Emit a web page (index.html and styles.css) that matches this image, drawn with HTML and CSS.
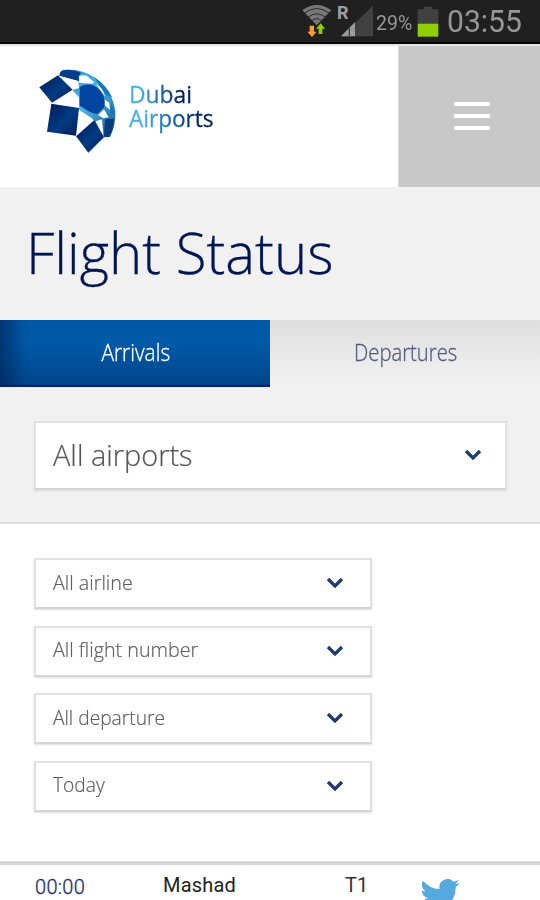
FILE: index.html
```html
<!DOCTYPE html>
<html lang="en">
<head>
<meta charset="utf-8">
<title>Flight Status</title>
<link rel="stylesheet" href="styles.css">
</head>
<body>
<div class="statusbar">
  <svg class="signals" width="75" height="42" viewBox="0 0 225 126">
    <path d="M7 31Q50 -1 94 31L50 76Z" fill="#777"/>
    <g fill="none" stroke="#2a2a2a" stroke-width="3">
      <path d="M14 39Q50 12 87 39"/><path d="M25 51Q50 32 76 51"/><path d="M35 62Q50 50 66 62"/>
    </g>
    <path d="M29 77h13v18h8L36 111 22 95h7Z" fill="#ff9c38"/>
    <path d="M56 102V86h-8l14-16 13 16h-8v16Z" fill="#8fd000"/>
    <path d="M123 109L219 17v92Z" fill="#414141"/>
    <path d="M123 109L165 66v43Z" fill="#9b9b9b"/>
    <path d="M148 84v25" stroke="#444" stroke-width="4"/>
    <text x="111" y="58" class="roam">R</text>
  </svg>
  <span class="percent"><span>29%</span></span>
  <svg class="battery" width="22" height="42" viewBox="0 0 66 126">
    <path d="M2 28h18v-8h25v8h19v43H2Z" fill="#414141"/><path d="M2 71h62v39H2Z" fill="#8fd000"/>
  </svg>
  <span class="clock"><span>03:55</span></span>
</div>
<header class="header">
  <div class="brand">
    <svg class="mark" width="90" height="100" viewBox="0 0 270 300">
      <defs>
        <linearGradient id="navy" x1="0" y1="0" x2="1" y2="1"><stop offset="0" stop-color="#001c55"/><stop offset=".55" stop-color="#003b83"/><stop offset="1" stop-color="#001c55"/></linearGradient>
        <linearGradient id="sky" x1="0" y1="0" x2="1" y2="1"><stop offset="0" stop-color="#2b8fca"/><stop offset=".5" stop-color="#4bb5e4"/><stop offset="1" stop-color="#16528f"/></linearGradient>
      </defs>
      <path d="M89 46Q90 32 103 30Q153 24 193 52Q246 88 256 153Q258 199 239 231L222 232 193 182 147 150 127 89 147 64Z" fill="url(#sky)"/>
      <path d="M88 47Q90 31 103 30Q130 27 153 38L146 50 147 64Z" fill="#003f88"/>
      <path d="M88 48L145 63 147 84 127 90ZM127 90L147 112 147 146 66 129ZM148 47L168 46 193 67 187 71 147 68ZM198 72L215 85 226 110 212 92ZM221 117L238 128 240 150 224 136ZM222 148L236 172 220 175 204 165ZM196 184L216 178 221 231ZM147 149L190 178 139 228Z" fill="#fff"/>
      <path d="M193 52Q230 77 246 112L228 104 212 82ZM243 130Q252 148 252 170L240 158Z" fill="#1876b8"/>
      <path d="M149 81Q163 72 184 74Q208 81 219 104Q228 125 222 142L203 162Q191 162 176 154L149 137Z" fill="#0046a0"/>
      <path d="M226 176L252 176Q250 207 239 231L221 230Z" fill="#073c7c"/>
      <path d="M84 46L128 89 66 128 28 82Z" fill="url(#navy)"/>
      <path d="M64 131L147 144 138 227 51 215Z" fill="url(#navy)"/>
      <path d="M193 180L222 232 175 278 138 229Z" fill="url(#navy)"/>
    </svg>
    <div class="wordmark"><span class="wm1">Dubai</span><span class="wm2">Airports</span></div>
  </div>
  <div class="menu"><i></i><i></i><i></i></div>
</header>
<section class="top">
  <h1><span>Flight Status</span></h1>
  <nav class="tabs">
    <div class="tab active"><span>Arrivals</span></div>
    <div class="tab"><span>Departures</span></div>
  </nav>
  <div class="select large"><span>All airports</span><svg width="18" height="12" viewBox="0 0 18 12"><path d="M2 2l7 7 7-7"/></svg></div>
</section>
<section class="filters">
  <div class="select"><span class="airline">All airline</span><svg width="18" height="12" viewBox="0 0 18 12"><path d="M2 2l7 7 7-7"/></svg></div>
  <div class="select"><span class="number">All flight number</span><svg width="18" height="12" viewBox="0 0 18 12"><path d="M2 2l7 7 7-7"/></svg></div>
  <div class="select"><span class="departure">All departure</span><svg width="18" height="12" viewBox="0 0 18 12"><path d="M2 2l7 7 7-7"/></svg></div>
  <div class="select"><span class="today">Today</span><svg width="18" height="12" viewBox="0 0 18 12"><path d="M2 2l7 7 7-7"/></svg></div>
</section>
<section class="flight">
  <span class="time">00:00</span><span class="city">Mashad</span><span class="terminal">T1</span>
  <svg class="bird" width="40" height="33" viewBox="0 0 24 20"><path fill="#55a9df" d="M24 2.400a9.800 9.800 0 0 1-2.800.8A4.900 4.900 0 0 0 23.300.5a9.800 9.800 0 0 1-3.100 1.200A4.900 4.900 0 0 0 11.800 6.100 14 14 0 0 1 1.700 1a4.900 4.900 0 0 0 1.500 6.500A4.900 4.900 0 0 1 1 6.900a4.900 4.900 0 0 0 3.900 4.900 5 5 0 0 1-2.200.1 4.900 4.900 0 0 0 4.600 3.400A9.900 9.900 0 0 1 0 17.300 14 14 0 0 0 21.500 4.900 10 10 0 0 0 24 2.400z"/></svg>
</section>
</body>
</html>
```
FILE: styles.css
```css
* { box-sizing: border-box; }
body { margin: 0; width: 540px; height: 900px; overflow: hidden; background: #fff; font-family: "Open Sans", sans-serif; font-weight: 300; }
svg { display: block; flex: none; }
span { white-space: nowrap; }
.statusbar { height: 44px; background: #202020; border-bottom: 2px solid #050505; display: flex; padding-left: 300px; font-family: Roboto, sans-serif; color: #969696; }
.roam { font: 700 54px Roboto, sans-serif; fill: #a0a0a0; }
.percent { width: 42px; padding-left: 1px; font-size: 21px; line-height: 46px; font-weight: 400; }
.percent > span, .clock > span { display: inline-block; transform-origin: left; }
.percent > span { transform: scaleX(.93); }
.clock { margin-left: 8px; font-size: 31px; line-height: 43px; font-weight: 400; }
.clock > span { transform: scaleX(.97); }
.header { height: 143px; display: flex; justify-content: space-between; border-top: 2px solid #e3e3e3; }
.brand { display: flex; padding: 14px 0 0 30px; }
.wordmark { display: flex; flex-direction: column; padding: 22px 0 0 9px; font-size: 24px; line-height: 24px; font-weight: 400; }
.wordmark span { align-self: flex-start; height: 24px; color: transparent; background: linear-gradient(90deg, #45b0e3 0 18%, #1763ab 52%, #00205b 80%); background-clip: text; -webkit-background-clip: text; transform-origin: left; -webkit-text-stroke: .3px transparent; }
.wordmark .wm1 { transform: scaleX(.95); }
.wordmark .wm2 { padding-bottom: 6px; height: 30px; transform: scaleX(.94); }
.menu { width: 142px; background: #c8c8c8; border-left: 1px solid #ddd; display: flex; flex-direction: column; align-items: center; gap: 8px; padding: 56px 0 0 4px; }
.menu i { width: 36px; height: 4px; background: #fff; border-radius: 1px; }
.top { height: 337px; background: #f1f1f1; border-bottom: 2px solid #dedede; }
h1 { margin: 0; height: 133px; padding-left: 26px; font-size: 57px; line-height: 131px; font-weight: 300; color: #001553; -webkit-text-stroke: .3px #001553; }
h1 span { display: inline-block; transform-origin: left; transform: scaleX(.988); }
.tabs { display: grid; grid-template-columns: 1fr 1fr; height: 67px; }
.tab { display: flex; justify-content: center; font-size: 23px; line-height: 64px; color: #54597d; background: linear-gradient(#dedede, #f1f1f1 90%); -webkit-text-stroke: .3px; padding-left: 1px; }
.tab span { transform: scaleX(.88); }
.tab.active { color: #fff; background: linear-gradient(90deg, rgba(0,35,90,.65), transparent 10%), linear-gradient(#0059a7 35%, #00468a 96%, #002073 97%); }
.tab.active span { transform: scaleX(.91); }
.select { display: flex; align-items: center; justify-content: space-between; width: 338px; height: 51px; padding: 0 26px 3px 17px; background: #fff; border: 2px solid #e1e1e1; border-bottom-color: #d4d4d4; box-shadow: 0 1px 2px #ddd; font-size: 20px; color: #5e5e5e; -webkit-text-stroke: .2px; }
.select span { transform-origin: left; transform: scaleX(.985); }
.select .departure { transform: scaleX(.96); }
.select .today { transform: scaleX(.96); }
.select svg { fill: none; stroke: #1f3c70; stroke-width: 3.3; position: relative; top: 1px; }
.select.large { width: 473px; height: 69px; margin: 34px 0 0 34px; padding: 0 23px 3px 17px; font-size: 30px; color: #555; }
.select.large span { transform: scaleX(.963); }
.filters { height: 341px; padding: 34px 0 0 34px; display: flex; flex-direction: column; gap: 16.5px; border-bottom: 4px solid #d7d7d7; }
.flight { display: flex; align-items: flex-start; height: 35px; padding-left: 35px; overflow: hidden; font: 400 20px/40px Roboto, sans-serif; color: #222; }
.time { width: 128px; margin-top: 2px; color: #1d2e69; font-weight: 300; letter-spacing: .3px; -webkit-text-stroke: .3px; }
.city { width: 182px; letter-spacing: .2px; }
.terminal { width: 75px; color: #333; }
.bird { margin-top: 14px; }
```
